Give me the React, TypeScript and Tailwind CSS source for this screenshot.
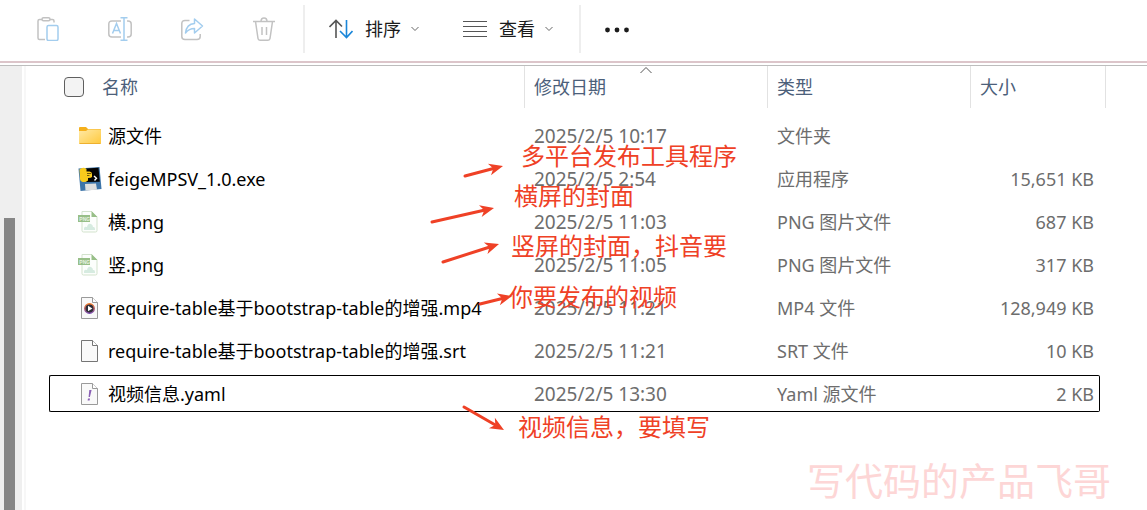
import type { ReactNode } from "react";

type FileKind = "folder" | "exe" | "png" | "video" | "blank" | "yaml";

interface FileEntry {
  name: string;
  kind: FileKind;
  date: string;
  type: string;
  size: string;
  focused?: boolean;
}

const files: FileEntry[] = [
  { name: "源文件", kind: "folder", date: "2025/2/5 10:17", type: "文件夹", size: "" },
  { name: "feigeMPSV_1.0.exe", kind: "exe", date: "2025/2/5 2:54", type: "应用程序", size: "15,651 KB" },
  { name: "横.png", kind: "png", date: "2025/2/5 11:03", type: "PNG 图片文件", size: "687 KB" },
  { name: "竖.png", kind: "png", date: "2025/2/5 11:05", type: "PNG 图片文件", size: "317 KB" },
  { name: "require-table基于bootstrap-table的增强.mp4", kind: "video", date: "2025/2/5 11:21", type: "MP4 文件", size: "128,949 KB" },
  { name: "require-table基于bootstrap-table的增强.srt", kind: "blank", date: "2025/2/5 11:21", type: "SRT 文件", size: "10 KB" },
  { name: "视频信息.yaml", kind: "yaml", date: "2025/2/5 13:30", type: "Yaml 源文件", size: "2 KB", focused: true },
];

function FolderIcon() {
  return (
    <svg width="24" height="24" viewBox="0 0 24 24">
      <defs>
        <linearGradient id="folder" x1="0" y1="0" x2="1" y2="1">
          <stop offset="0" stopColor="#ffe9a6" />
          <stop offset="1" stopColor="#ffc93c" />
        </linearGradient>
      </defs>
      <path d="M1 4q0-1 1-1h6l2 2h12q1 0 1 1v4H1z" fill="#f5b01c" />
      <path d="M1 7h7l2-1.500h12q1 0 1 1V19q0 1-1 1H2q-1 0-1-1z" fill="url(#folder)" />
      <path d="M1.500 19.500h21" stroke="#eeb02e" />
    </svg>
  );
}

function ExeIcon() {
  return (
    <svg width="24" height="24" viewBox="0 0 24 24">
      <path d="M.5 1.500 21.500 0 23.500 22 2.500 24z" fill="#3d74a8" />
      <path d="M8 1.500 20.500.8l1.300 14L8 15z" fill="#050505" />
      <path d="m7 17 11-.5 1 6.300-11.500.8z" fill="#dedede" />
      <path d="M1.500 2.500Q5-.8 8.500 2v2.500h3q2.500.2 2.500 2.500v3q-.5 1-4 1v2.500q-3 2.500-6.500 1-2-1.500-1.500-4.500z" fill="#f8cb1c" />
      <path d="M9 6.500h4M9 8.500h2.500" stroke="#50400a" strokeWidth=".8" />
      <path d="m16 9 2.500 2.300-2 2.200" fill="none" stroke="#fff" strokeWidth="1.400" />
    </svg>
  );
}

function PngIcon() {
  return (
    <svg width="24" height="24" viewBox="0 0 24 24">
      <path d="M4 1.500h9.500L19 7v13.500q0 1.500-1.500 1.500h-12Q4 22 4 20.500z" fill="#fcfefc" stroke="#d3e3cd" />
      <path d="M13.500 1 19.500 7h-6z" fill="#98bf88" />
      <path d="M6 20v-2q1-2 3-1 1-4 4-3 2 1 2 3 2-.5 2 2v1z" fill="#d6ebe0" />
      <rect y="5" width="12" height="7" fill="#98bf88" />
      <text x="1.300" y="10.500" fontSize="5" fontWeight="700" fill="#e8f3e3" fontFamily="Liberation Sans">PNG</text>
    </svg>
  );
}

function PageIcon({ dim, children }: { dim?: boolean; children?: ReactNode }) {
  const stroke = dim ? "#9a9a9a" : "#757575";
  return (
    <svg width="24" height="24" viewBox="0 0 24 24">
      <path d="M3.500 1.500h11l5 5v16h-16z" fill="#f9f9f9" stroke={stroke} />
      <path d="M14.500 1.500v5h5" fill="#fff" stroke={stroke} />
      {children}
    </svg>
  );
}

function FileIcon({ kind }: { kind: FileKind }) {
  switch (kind) {
    case "folder":
      return <FolderIcon />;
    case "exe":
      return <ExeIcon />;
    case "png":
      return <PngIcon />;
    case "video":
      return (
        <PageIcon dim>
          <defs>
            <linearGradient id="play" x1="0" y1="0" x2="0" y2="1">
              <stop offset="0" stopColor="#f47b2a" />
              <stop offset="1" stopColor="#7a4bb0" />
            </linearGradient>
          </defs>
          <circle cx="11.500" cy="12.500" r="4.700" fill="#2f2f38" stroke="url(#play)" strokeWidth="1.500" />
          <path d="m10 9.800 4.400 2.700-4.400 2.700z" fill="#fff" />
        </PageIcon>
      );
    case "yaml":
      return (
        <PageIcon dim>
          <path d="M11.300 8h2.300l-1.700 7h-1.300zM10 16.500h2l-.4 2H9.600z" fill="#8a5fb5" />
        </PageIcon>
      );
    default:
      return <PageIcon />;
  }
}

const actions: { label: string; icon: ReactNode }[] = [
  {
    label: "粘贴",
    icon: (
      <>
        <path d="M6 2.500H3.500q-1.500 0-1.500 1.500v17q0 1.500 1.500 1.500H9M14 2.500h2.500q1.500 0 1.500 1.500v1.500" />
        <rect x="6" y=".8" width="8" height="3" rx="1.500" />
        <rect x="11" y="8.500" width="11" height="15" rx="1.500" stroke="#a3cdee" />
      </>
    ),
  },
  {
    label: "重命名",
    icon: (
      <>
        <path d="M13 4H4Q.8 4 .8 7v10q0 3 3.200 3h9M19 4h1q3.200 0 3.200 3v10q0 3-3.200 3h-1" />
        <path d="m4.500 16.500 4-10 4 10M6 13.500h5M12.500.8h7M12.500 23.200h7M16 1v22" stroke="#a3cdee" />
      </>
    ),
  },
  {
    label: "共享",
    icon: (
      <>
        <path d="M9.500 3.500H5Q1.800 3.500 1.800 6.500v13q0 3 3.200 3h12q3.200 0 3.200-3V17" />
        <path d="M14.500 2v4.500Q6.500 7 5.500 16q3.500-4.500 9-4.500V16l8-7z" stroke="#a3cdee" strokeLinejoin="round" />
      </>
    ),
  },
  {
    label: "删除",
    icon: (
      <>
        <path d="M1 4.500h22M3.500 4.500 6 21.500q.2 1.700 2 1.700h8q1.800 0 2-1.700l2.500-17M9 4.500q0-3.500 3-3.500t3 3.500M10 10v8M14.500 10v8" />
      </>
    ),
  },
];

function Chevron() {
  return (
    <svg width="8" height="8" viewBox="0 0 8 8" fill="none" stroke="#666">
      <path d="m.5 2 3.500 3.500L7.500 2" />
    </svg>
  );
}

function Toolbar() {
  return (
    <header className="flex items-center border-b-2 border-[#dcc5ca] pt-[5px] pb-2">
      <div className="flex gap-12 pl-9">
        {actions.map((action) => (
          <button key={action.label} type="button" disabled aria-label={action.label}>
            <svg width="24" height="24" viewBox="0 0 24 24" fill="none" stroke="#c2c2c2" strokeWidth="1.500">
              {action.icon}
            </svg>
          </button>
        ))}
      </div>
      <div className="ml-[27px] h-12 w-0.5 bg-[#eee]" />
      <button type="button" className="ml-6 flex items-center">
        <svg width="24" height="24" viewBox="0 0 24 24" fill="none" strokeWidth="1.600">
          <path d="M7 21V3.500M.5 10 7 3.500l6 6" stroke="#555" />
          <path d="M17.500 3v17.500M11 14l6.500 6.500L23.500 14" stroke="#1a86d9" />
        </svg>
        <span className="ml-3 leading-6">排序</span>
        <span className="ml-2.5">
          <Chevron />
        </span>
      </button>
      <button type="button" className="ml-11 flex items-center">
        <svg width="24" height="24" viewBox="0 0 24 24" stroke="#555">
          <path d="M0 4.500h24M0 9.500h24M0 14.500h24M0 19.500h24" />
        </svg>
        <span className="ml-3 leading-6">查看</span>
        <span className="ml-2.5">
          <Chevron />
        </span>
      </button>
      <div className="ml-[26px] h-12 w-0.5 bg-[#eee]" />
      <button type="button" aria-label="更多" className="ml-6">
        <svg width="24" height="24" viewBox="0 0 24 24" fill="#1b1b1b">
          <circle cx="2.500" cy="13" r="2.400" />
          <circle cx="12" cy="13" r="2.400" />
          <circle cx="21.500" cy="13" r="2.400" />
        </svg>
      </button>
    </header>
  );
}

function HeaderCell({ children, sorted }: { children: ReactNode; sorted?: boolean }) {
  return (
    <th className="relative p-0 text-left align-top font-normal">
      <div className="flex h-[42px] items-center border-l border-[#e2e2e2] pl-[9px]">{children}</div>
      {sorted && (
        <svg className="absolute top-0 left-1/2 -translate-x-1/2" width="12" height="8" viewBox="0 0 12 8" fill="none" stroke="#555">
          <path d="m.5 7 5.500-5.500L11.500 7" />
        </svg>
      )}
    </th>
  );
}

function FileTable() {
  return (
    <table className="-mt-1.5 w-full table-fixed border-separate border-spacing-x-0 border-spacing-y-1.5">
      <colgroup>
        <col />
        <col className="w-[243px]" />
        <col className="w-[203px]" />
        <col className="w-[130px]" />
        <col className="w-1.5" />
      </colgroup>
      <thead className="text-[#4c607a]">
        <tr className="h-[45px]">
          <th className="p-0 text-left align-top font-normal">
            <label className="flex h-[42px] items-center gap-[18px] pl-[15px]">
              <input
                type="checkbox"
                className="h-5 w-5 appearance-none rounded border border-[#5f5f5f] bg-[#f3f3f3]"
              />
              名称
            </label>
          </th>
          <HeaderCell sorted>修改日期</HeaderCell>
          <HeaderCell>类型</HeaderCell>
          <HeaderCell>大小</HeaderCell>
          <td className="p-0 align-top">
            <div className="h-[42px] border-r border-[#e2e2e2]" />
          </td>
        </tr>
      </thead>
      <tbody>
        {files.map((file) => {
          const edge = file.focused ? "border-black" : "border-transparent";
          return (
            <tr key={file.name} className="h-[37px] text-[#6d6d6d]">
              <td className={`rounded-l-xs border-y border-l p-0 ${edge}`}>
                <div className="flex items-center gap-1.5 pl-7 whitespace-nowrap text-black">
                  <FileIcon kind={file.kind} />
                  {file.name}
                </div>
              </td>
              <td className={`border-y py-0 pr-0 pl-2.5 text-[19px] leading-6 ${edge}`}>{file.date}</td>
              <td className={`border-y py-0 pr-0 pl-2.5 ${edge}`}>{file.type}</td>
              <td className={`rounded-r-xs border-y border-r py-0 pr-[5px] pl-0 text-right ${edge}`}>{file.size}</td>
            </tr>
          );
        })}
      </tbody>
    </table>
  );
}

const arrows = [
  { from: [465, 176], to: [503, 166] },
  { from: [432, 222], to: [494, 208] },
  { from: [443, 262], to: [499, 244] },
  { from: [480, 304], to: [512, 296] },
  { from: [464, 407], to: [504, 430] },
];

function Annotations() {
  return (
    <div className="pointer-events-none text-2xl leading-8 whitespace-nowrap text-[#ef4126]">
      <svg className="absolute top-0 left-0" width="520" height="440" viewBox="0 0 520 440">
        {arrows.map(({ from, to }) => {
          const angle = (Math.atan2(to[1] - from[1], to[0] - from[0]) * 180) / Math.PI;
          const length = Math.hypot(to[0] - from[0], to[1] - from[1]);
          return (
            <g key={from[0]} transform={`translate(${to[0]} ${to[1]}) rotate(${angle})`}>
              <path d={`M${-length} 0H-8`} stroke="currentColor" strokeWidth="3" strokeLinecap="round" />
              <path d="M0 0-14-6-10 0-14 6z" fill="currentColor" />
            </g>
          );
        })}
      </svg>
      <p className="absolute top-[140px] left-[521px]">多平台发布工具程序</p>
      <p className="absolute top-[180px] left-[514px]">横屏的封面</p>
      <p className="absolute top-[230px] left-[511px]">竖屏的封面，抖音要</p>
      <p className="absolute top-[281px] left-[509px]">你要发布的视频</p>
      <p className="absolute top-[411px] left-[518px]">视频信息，要填写</p>
    </div>
  );
}

export default function App() {
  return (
    <div
      lang="zh-CN"
      className="relative flex min-h-screen flex-col overflow-hidden bg-white font-['Noto_Sans','Noto_Sans_CJK_SC',sans-serif] text-[18px] leading-6 text-[#1b1b1b]"
    >
      <Toolbar />
      <div className="mt-0.5 flex flex-1 border-t border-[#bdbdbd]">
        <aside className="flex w-[22px] flex-col bg-[#efefef] pl-1">
          <div className="mt-[152px] w-[11px] flex-1 bg-[#868686]" />
        </aside>
        <main className="ml-0.5 min-w-0 flex-1 border-l-2 border-[#f7f7f7] pr-[41px] pl-[23px]">
          <FileTable />
        </main>
      </div>
      <Annotations />
      <p className="absolute right-[36px] bottom-1 text-[38px] leading-[52px] text-[#fdd6d6]">写代码的产品飞哥</p>
    </div>
  );
}
